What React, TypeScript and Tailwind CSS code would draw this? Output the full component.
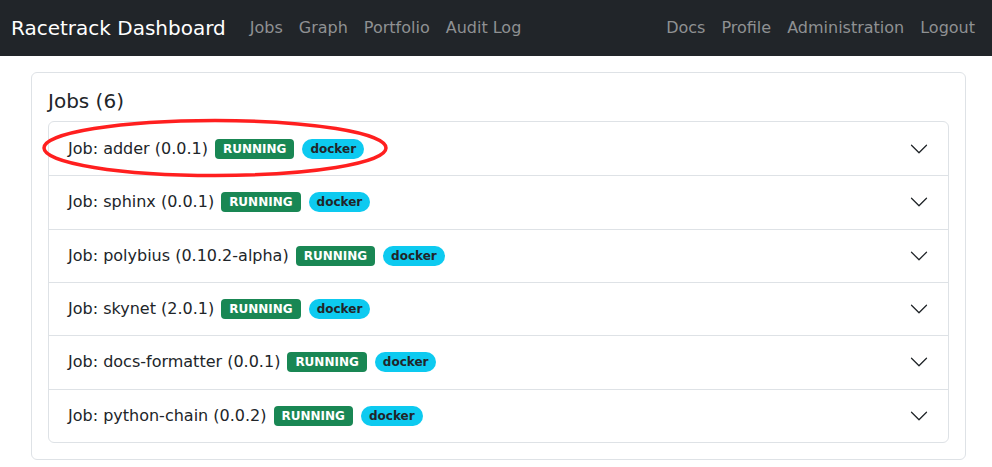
import React from "react";

const jobs = [
  { name: "adder", version: "0.0.1" },
  { name: "sphinx", version: "0.0.1" },
  { name: "polybius", version: "0.10.2-alpha" },
  { name: "skynet", version: "2.0.1" },
  { name: "docs-formatter", version: "0.0.1" },
  { name: "python-chain", version: "0.0.2" },
];

function Chevron() {
  return (
    <svg width="20" height="20" viewBox="0 0 16 16" fill="#212529">
      <path
        fillRule="evenodd"
        d="M1.646 4.646a.5.5 0 0 1 .708 0L8 10.293l5.646-5.647a.5.5 0 0 1 .708.708l-6 6a.5.5 0 0 1-.708 0l-6-6a.5.5 0 0 1 0-.708z"
      />
    </svg>
  );
}

export default function App() {
  return (
    <div
      className="relative min-h-[467px] bg-white text-[#212529]"
      style={{ fontFamily: '"DejaVu Sans", sans-serif' }}
    >
      <nav className="flex h-[56px] items-center justify-between bg-[#212529] pl-[11px] pr-[9px]">
        <div className="flex items-center">
          <span className="mr-[16px] text-[20px] text-white">Racetrack Dashboard</span>
          {["Jobs", "Graph", "Portfolio", "Audit Log"].map((l) => (
            <span key={l} className="px-2 text-[16px] text-[#8f9193]">
              {l}
            </span>
          ))}
        </div>
        <div className="flex items-center">
          {["Docs", "Profile", "Administration", "Logout"].map((l) => (
            <span key={l} className="px-2 text-[16px] text-[#8f9193]">
              {l}
            </span>
          ))}
        </div>
      </nav>

      <div className="ml-[31px] mt-[16px] w-[935px] rounded-[6px] border border-[#dee2e6] p-[16px]">
        <h5 className="mb-[8px] text-[20px] leading-[24px]">Jobs (6)</h5>
        <div className="overflow-hidden rounded-[6px] border border-[#dee2e6]">
          {jobs.map((j, i) => (
            <div
              key={j.name}
              className={`flex h-[53.33px] items-center justify-between px-[19px] ${
                i > 0 ? "border-t border-[#dee2e6]" : ""
              }`}
            >
              <div className="flex items-center text-[16px]">
                <span>
                  Job: {j.name} ({j.version})
                </span>
                <span className="ml-[7px] rounded-[4px] bg-[#198754] px-[8px] py-[4px] text-[12px] font-bold leading-[12px] text-white">
                  RUNNING
                </span>
                <span className="ml-[8px] rounded-full bg-[#0dcaf0] px-[8px] py-[4px] text-[12px] font-bold leading-[12px] text-[#212529]">
                  docker
                </span>
              </div>
              <Chevron />
            </div>
          ))}
        </div>
      </div>

      <svg
        className="pointer-events-none absolute left-0 top-0"
        width="992"
        height="467"
      >
        <ellipse cx="215" cy="148" rx="171" ry="27.5" fill="none" stroke="#ff1f1f" strokeWidth="3.5" />
      </svg>
    </div>
  );
}
